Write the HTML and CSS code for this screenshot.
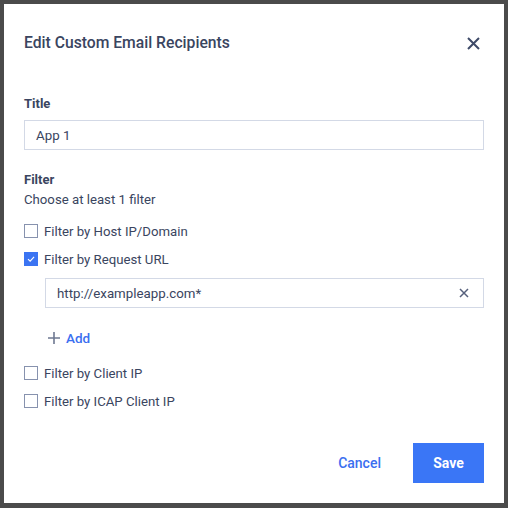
FILE: index.html
```html
<!DOCTYPE html>
<html>
<head>
<meta charset="utf-8">
<link rel="stylesheet" href="styles.css">
</head>
<body>
<div class="backdrop">
  <div class="modal">
    <div class="modal-header">
      <h1 class="modal-title">Edit Custom Email Recipients</h1>
      <button class="close-btn" aria-label="Close">
        <svg width="13" height="13" viewBox="0 0 13 13"><path d="M1 1L12 12M12 1L1 12" stroke="#3e4a68" stroke-width="2" fill="none"/></svg>
      </button>
    </div>
    <div class="modal-body">
      <div class="label">Title</div>
      <div class="input title-input">App 1</div>

      <div class="label filter-label">Filter</div>
      <div class="hint">Choose at least 1 filter</div>

      <div class="check-row first">
        <span class="checkbox"></span>
        <span>Filter by Host IP/Domain</span>
      </div>
      <div class="check-row">
        <span class="checkbox checked">
          <svg width="14" height="14" viewBox="0 0 14 14"><path d="M3.5 7.2L6 9.6L10.6 4.6" stroke="#fff" stroke-width="1.3" fill="none"/></svg>
        </span>
        <span>Filter by Request URL</span>
      </div>
      <div class="input url-input">
        <span>http://exampleapp.com*</span>
        <svg width="10" height="10" viewBox="0 0 10 10"><path d="M1 1L9 9M9 1L1 9" stroke="#56607c" stroke-width="1.5" fill="none"/></svg>
      </div>
      <div class="add-row">
        <svg width="12" height="12" viewBox="0 0 12 12"><path d="M6 0V12M0 6H12" stroke="#6e7891" stroke-width="1.6" fill="none"/></svg>
        <span>Add</span>
      </div>
      <div class="check-row third">
        <span class="checkbox"></span>
        <span>Filter by Client IP</span>
      </div>
      <div class="check-row">
        <span class="checkbox"></span>
        <span>Filter by ICAP Client IP</span>
      </div>
    </div>
    <div class="modal-footer">
      <button class="btn-cancel">Cancel</button>
      <button class="btn-save">Save</button>
    </div>
  </div>
</div>
</body>
</html>
```
FILE: styles.css
```css
* { box-sizing: border-box; }
html, body { margin: 0; padding: 0; }
body {
  background: #4b4b4b;
  font-family: Roboto, "Liberation Sans", sans-serif;
  color: #3a4560;
  width: 508px;
  height: 508px;
  overflow: hidden;
}
.backdrop {
  padding: 4px 4px 5px 4px;
}
.modal {
  width: 500px;
  height: 499px;
  background: #fff;
  display: flex;
  flex-direction: column;
}
.modal-header {
  display: flex;
  align-items: center;
  justify-content: space-between;
  padding: 28px 24px 0 20px;
}
.modal-title {
  margin: 0;
  font-size: 15.7px;
  font-weight: 500;
  line-height: 22px;
  color: #3a4560;
}
.close-btn {
  border: 0;
  background: none;
  padding: 0;
  width: 13px;
  height: 13px;
  display: flex;
}
.modal-body {
  padding: 41px 20px 0 20px;
  display: flex;
  flex-direction: column;
}
.label {
  font-size: 13px;
  font-weight: 700;
  line-height: 18px;
}
.input {
  border: 1px solid #d3d9e6;
  height: 30px;
  display: flex;
  align-items: center;
  font-size: 13.3px;
  color: #3a4560;
}
.title-input {
  margin-top: 7px;
  padding-left: 11px;
}
.filter-label {
  margin-top: 20px;
  line-height: 20px;
}
.hint {
  font-size: 13.2px;
  line-height: 20px;
}
.check-row {
  display: flex;
  align-items: center;
  gap: 6px;
  height: 20px;
  margin-top: 8px;
  font-size: 13.2px;
}
.check-row.first { margin-top: 11px; }
.check-row.third { margin-top: 15px; }
.checkbox {
  width: 14px;
  height: 14px;
  border: 1px solid #8792ae;
  display: flex;
  align-items: center;
  justify-content: center;
}
.checkbox.checked {
  background: #3b74f2;
  border-color: #3b74f2;
}
.url-input {
  margin-top: 9px;
  margin-left: 21px;
  padding: 0 14px 0 11px;
  justify-content: space-between;
}
.add-row {
  margin-top: 20px;
  margin-left: 24px;
  display: flex;
  align-items: center;
  gap: 6px;
  height: 20px;
  font-size: 13.5px;
  font-weight: 500;
  color: #3b6ff0;
}
.modal-footer {
  margin-top: auto;
  padding: 0 20px 20px 20px;
  display: flex;
  justify-content: flex-end;
}
.modal-footer button {
  font-family: Roboto, "Liberation Sans", sans-serif;
  font-size: 14px;
  border: 0;
  height: 40px;
  cursor: pointer;
}
.btn-cancel {
  background: none;
  color: #3b6ff0;
  font-weight: 500;
  padding: 0 32px 0 16px;
}
.btn-save {
  background: #3a76f6;
  color: #fff;
  font-weight: 700;
  width: 71px;
  padding: 0;
}
```
